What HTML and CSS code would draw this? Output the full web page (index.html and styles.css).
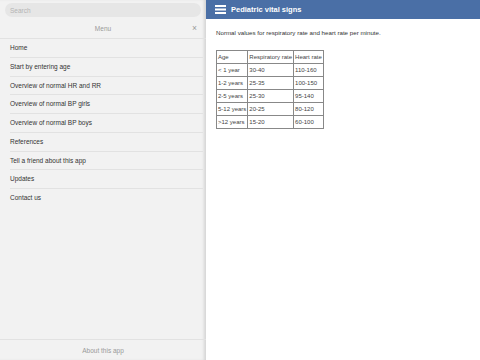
FILE: index.html
```html
<!DOCTYPE html>
<html>
<head>
<meta charset="utf-8">
<link rel="stylesheet" href="styles.css">
</head>
<body>
<div class="app">
  <aside class="side">
    <div class="search"><span>Search</span></div>
    <div class="menu-head"><span class="menu-title">Menu</span><span class="close">×</span></div>
    <ul class="nav">
      <li>Home</li>
      <li>Start by entering age</li>
      <li>Overview of normal HR and RR</li>
      <li>Overview of normal BP girls</li>
      <li>Overview of normal BP boys</li>
      <li>References</li>
      <li>Tell a friend about this app</li>
      <li>Updates</li>
      <li>Contact us</li>
    </ul>
    <div class="about">About this app</div>
  </aside>
  <main class="main">
    <header class="bar">
      <svg class="burger" width="11" height="9" viewBox="0 0 11 9"><rect x="0" y="0" width="11" height="2" fill="#fff"/><rect x="0" y="3.5" width="11" height="2" fill="#fff"/><rect x="0" y="7" width="11" height="2" fill="#fff"/></svg>
      <span class="title">Pediatric vital signs</span>
    </header>
    <section class="content">
      <p class="intro">Normal values for respiratory rate and heart rate per minute.</p>
      <table class="vt">
        <tr><td>Age</td><td>Respiratory rate</td><td>Heart rate</td></tr>
        <tr><td>&lt; 1 year</td><td>30-40</td><td>110-160</td></tr>
        <tr><td>1-2 years</td><td>25-35</td><td>100-150</td></tr>
        <tr><td>2-5 years</td><td>25-30</td><td>95-140</td></tr>
        <tr><td>5-12 years</td><td>20-25</td><td>80-120</td></tr>
        <tr><td>&gt;12 years</td><td>15-20</td><td>60-100</td></tr>
      </table>
    </section>
  </main>
</div>
</body>
</html>
```
FILE: styles.css
```css
html, body { margin: 0; padding: 0; }
body { font-family: "Liberation Sans", Arial, sans-serif; background: #fff; width: 480px; height: 360px; overflow: hidden; }
.app { display: flex; height: 360px; }
.side { width: 206px; flex: none; background: #f2f2f2; display: flex; flex-direction: column; box-shadow: inset -3px 0 3px -1px rgba(0,0,0,0.12); }
.search { margin: 3px 5px 0 5px; height: 14px; border-radius: 7px; background: #e6e6e6; display: flex; align-items: center; padding-left: 5px; }
.search span { font-size: 6.5px; color: #b4b4b4; }
.menu-head { height: 20px; display: flex; align-items: center; justify-content: center; position: relative; border-bottom: 1px solid #e2e2e2; margin-top: 1px; }
.menu-title { font-size: 6.5px; color: #999; }
.close { position: absolute; right: 9px; top: 5px; font-size: 8.5px; color: #999; }
.nav { list-style: none; margin: 0; padding: 0 0 0 10px; flex: 1; }
.nav li { height: 17.75px; line-height: 18px; font-size: 6.5px; color: #333; border-bottom: 1px solid #e2e2e2; margin-right: 3px; }
.nav li:last-child { border-bottom: none; }
.about { height: 20px; border-top: 1px solid #e2e2e2; display: flex; align-items: center; justify-content: center; font-size: 6.5px; color: #999; }
.main { flex: 1; display: flex; flex-direction: column; }
.bar { height: 19px; background: #4a6fa6; display: flex; align-items: center; padding-left: 9px; }
.burger { display: block; margin-right: 5px; }
.title { color: #fff; font-weight: bold; font-size: 7.5px; }
.content { padding: 0 10px; }
.intro { margin: 10px 0 0 0; font-size: 6.2px; color: #333; }
.vt { margin-top: 14px; border-collapse: collapse; font-size: 6px; color: #444; border: 1px solid #777; }
.vt td { border: 1px solid #888; height: 12px; padding: 0 1px; white-space: nowrap; }
```
